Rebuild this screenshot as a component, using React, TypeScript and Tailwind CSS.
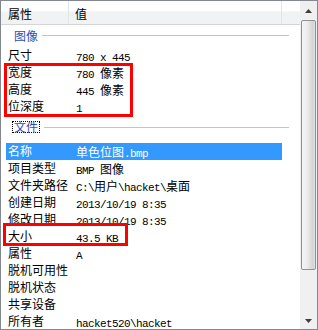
import type { ReactNode } from "react";

type Row = { label: string; value: string };

const imageRows: Row[] = [
  { label: "尺寸", value: "780 x 445" },
  { label: "宽度", value: "780 像素" },
  { label: "高度", value: "445 像素" },
  { label: "位深度", value: "1" },
];

const fileRows: Row[] = [
  { label: "名称", value: "单色位图.bmp" },
  { label: "项目类型", value: "BMP 图像" },
  { label: "文件夹路径", value: "C:\\用户\\hacket\\桌面" },
  { label: "创建日期", value: "2013/10/19 8:35" },
  { label: "修改日期", value: "2013/10/19 8:35" },
  { label: "大小", value: "43.5 KB" },
  { label: "属性", value: "A" },
  { label: "脱机可用性", value: "" },
  { label: "脱机状态", value: "" },
  { label: "共享设备", value: "" },
  { label: "所有者", value: "hacket520\\hacket" },
];

// latin runs get the narrow mono face, CJK runs stay 12px
function Value({ text }: { text: string }) {
  const parts = text.split(/([\u3000-\u9fff]+)/).filter(Boolean);
  return (
    <>
      {parts.map((p, i) =>
        /[\u3000-\u9fff]/.test(p) ? (
          <span key={i} className="text-[12px]">
            {p}
          </span>
        ) : (
          <span
            key={i}
            className="font-['Liberation_Mono',monospace] text-[11px] tracking-[-0.6px] whitespace-pre"
          >
            {p}
          </span>
        )
      )}
    </>
  );
}

function PropRow({ row, selected }: { row: Row; selected?: boolean }) {
  return (
    <div
      className={
        "ml-[5px] w-[276px] h-[17px] flex items-center leading-none " +
        (selected ? "bg-[#3399ff] text-white" : "text-black")
      }
    >
      <div className="w-[70px] pl-[2px] text-[12px] whitespace-nowrap">{row.label}</div>
      <div className="flex-1 whitespace-nowrap">
        <Value text={row.value} />
      </div>
    </div>
  );
}

function GroupHeader({ children, tall }: { children: ReactNode; tall?: boolean }) {
  return (
    <div
      className={
        "flex items-center pr-[11px] " +
        (tall ? "h-[28px] pl-[11px] pb-[3px]" : "h-[22px] pl-[13px]")
      }
    >
      {children}
      <div className="ml-[4px] flex-1 h-px bg-[#b3c6e6]" />
    </div>
  );
}

function Arrow({ up }: { up?: boolean }) {
  return (
    <svg width="7" height="4" viewBox="0 0 7 4">
      <path d={up ? "M0 4 L3.5 0 L7 4 Z" : "M0 0 L3.5 4 L7 0 Z"} fill="#3c3c3c" />
    </svg>
  );
}

export default function App() {
  return (
    <div className="relative w-[318px] h-[330px] border border-[#828790] bg-white overflow-hidden flex font-['Noto_Sans_CJK_SC',sans-serif]">
      {/* ── list area ── */}
      <div className="w-[299px] flex flex-col">
        <div className="h-[24px] shrink-0 flex border-b border-[#d5d5d5] bg-[linear-gradient(to_bottom,#ffffff_0%,#ffffff_45%,#f1f2f4_46%,#f1f2f4_100%)] text-[12px] text-black">
          <div className="w-[68px] pl-[7px] pt-[3px] flex items-center border-r border-[#e1e4e8]">属性</div>
          <div className="w-[213px] pl-[6px] pt-[3px] flex items-center border-r border-[#e1e4e8]">值</div>
          <div className="flex-1" />
        </div>

        <GroupHeader>
          <span className="text-[12px] leading-none text-[#2a4fb6]">图像</span>
        </GroupHeader>
        {imageRows.map((r) => (
          <PropRow key={r.label} row={r} />
        ))}

        <GroupHeader tall>
          <span className="h-[12px] px-[1px] border border-dotted border-black text-[12px] leading-[10px] text-[#2a4fb6]">
            文件
          </span>
        </GroupHeader>
        {fileRows.map((r, i) => (
          <PropRow key={r.label} row={r} selected={i === 0} />
        ))}
      </div>

      {/* ── vertical scrollbar ── */}
      <div className="w-[17px] shrink-0 flex flex-col bg-[#f0f0f0]">
        <div className="h-[19px] flex items-center justify-center">
          <Arrow up />
        </div>
        <div className="h-[250px] mx-[1px] rounded-[2px] border border-[#8f9090] bg-[linear-gradient(to_right,#f5f5f5_0%,#ececec_40%,#d3d3d3_85%,#e4e4e4_100%)]" />
        <div className="flex-1" />
        <div className="h-[17px] flex items-center justify-center">
          <Arrow />
        </div>
      </div>

      {/* red annotation boxes */}
      <div className="absolute left-[3px] top-[62px] w-[129px] h-[54px] border-[3px] border-[#ff0000]" />
      <div className="absolute left-[2px] top-[222px] w-[125px] h-[23px] border-[3px] border-[#ff0000]" />
    </div>
  );
}
